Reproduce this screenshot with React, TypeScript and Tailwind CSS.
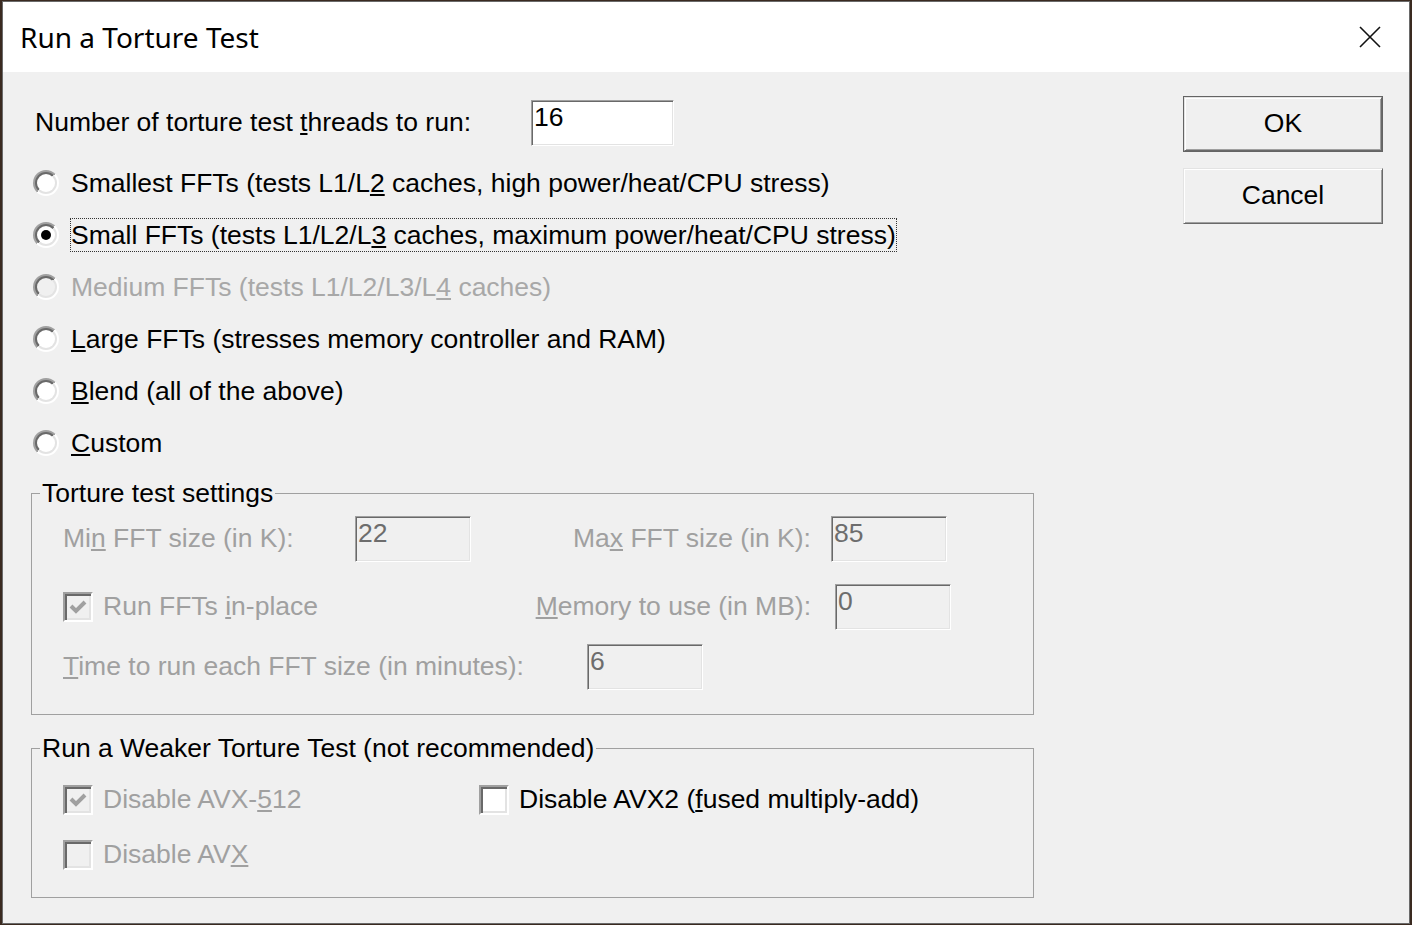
import React from 'react';

const sunkenInput =
  'border border-t-[#a0a0a0] border-l-[#a0a0a0] border-b-white border-r-white shadow-[inset_1px_1px_0_#696969,inset_-1px_-1px_0_#e3e3e3]';

const Radio = ({ checked = false, disabled = false }: { checked?: boolean; disabled?: boolean }) => (
  <div className="w-[26px] h-[26px] rounded-full p-[2px] bg-[linear-gradient(135deg,#a0a0a0_50%,#ffffff_50%)] shrink-0">
    <div className="w-full h-full rounded-full p-[2px] bg-[linear-gradient(135deg,#696969_50%,#e3e3e3_50%)]">
      <div
        className={`w-full h-full rounded-full flex items-center justify-center ${
          disabled ? 'bg-[#f0f0f0]' : 'bg-white'
        }`}
      >
        {checked && <div className="w-[10px] h-[10px] rounded-full bg-black" />}
      </div>
    </div>
  </div>
);

const Check = ({ checked = false, disabled = false }: { checked?: boolean; disabled?: boolean }) => (
  <div
    className={`w-[30px] h-[30px] shrink-0 border-2 border-t-[#a0a0a0] border-l-[#a0a0a0] border-b-white border-r-white shadow-[inset_2px_2px_0_#696969,inset_-2px_-2px_0_#e3e3e3] flex items-center justify-center ${
      disabled ? 'bg-[#f0f0f0]' : 'bg-white'
    }`}
  >
    {checked && (
      <svg width="20" height="20" viewBox="0 0 20 20">
        <polyline
          points="3,9 8,14 17,5"
          fill="none"
          stroke={disabled ? '#a0a0a0' : '#000'}
          strokeWidth="4"
        />
      </svg>
    )}
  </div>
);

const Field = ({ value, disabled = false, w = 'w-[116px]' }: { value: string; disabled?: boolean; w?: string }) => (
  <div
    className={`${w} h-[46px] shrink-0 ${sunkenInput} ${
      disabled ? 'bg-[#f0f0f0] text-[#6d6d6d]' : 'bg-white text-black'
    } pl-[2px] pt-[1px] leading-[30px]`}
  >
    {value}
  </div>
);

const RadioRow = ({
  children,
  checked,
  disabled,
  focus,
}: {
  children: React.ReactNode;
  checked?: boolean;
  disabled?: boolean;
  focus?: boolean;
}) => (
  <div className="h-[52px] flex items-center pl-[2px]">
    <Radio checked={checked} disabled={disabled} />
    <span
      className={`ml-[11px] leading-[32px] border ${
        focus ? 'border-dotted border-[#333]' : 'border-transparent'
      } ${disabled ? 'text-[#a8a8a8]' : 'text-black'}`}
    >
      {children}
    </span>
  </div>
);

export default function App() {
  return (
    <div className="w-[1412px] h-[925px] bg-[#3a2a20] pl-[2px] pt-[1px] pr-[2px] pb-[1px] font-['Liberation_Sans',Arial,sans-serif] text-[26.5px] overflow-hidden">
      <div className="w-full h-full border border-[#6a6a6a] flex flex-col">
        {/* title bar */}
        <div className="h-[70px] bg-white flex items-center justify-between pl-[17px] pr-[28px] shrink-0">
          <span className="font-['Noto_Sans',sans-serif] text-[28px] text-black">Run a Torture Test</span>
          <svg width="22" height="22" viewBox="0 0 22 22">
            <path d="M1 1 L21 21 M21 1 L1 21" stroke="#111" strokeWidth="1.6" />
          </svg>
        </div>

        {/* body */}
        <div className="flex-1 bg-[#f0f0f0] flex justify-between pr-[26px]">
          <div className="pl-[28px] pt-[28px]">
            <div className="h-[46px] flex items-center">
              <span className="w-[500px] pl-[4px]">
                Number of torture test <u>t</u>hreads to run:
              </span>
              <Field value="16" w="w-[143px]" />
            </div>

            <div className="mt-[11px]">
              <RadioRow>
                Smallest FFTs (tests L1/L<u>2</u> caches, high power/heat/CPU stress)
              </RadioRow>
              <RadioRow checked focus>
                Small FFTs (tests L1/L2/L<u>3</u> caches, maximum power/heat/CPU stress)
              </RadioRow>
              <RadioRow disabled>
                Medium FFTs (tests L1/L2/L3/L<u>4</u> caches)
              </RadioRow>
              <RadioRow>
                <u>L</u>arge FFTs (stresses memory controller and RAM)
              </RadioRow>
              <RadioRow>
                <u>B</u>lend (all of the above)
              </RadioRow>
              <RadioRow>
                <u>C</u>ustom
              </RadioRow>
            </div>

            {/* Torture test settings */}
            <fieldset className="mt-[9px] w-[1003px] border border-[#a0a0a0] pl-[8px] pr-0 pt-0 pb-[24px]">
              <legend className="px-[2px] leading-[30px] text-black">Torture test settings</legend>
              <div className="pl-[23px] pt-[8px] text-[#a0a0a0]">
                <div className="h-[46px] flex items-center">
                  <span className="w-[292px]">
                    Mi<u>n</u> FFT size (in K):
                  </span>
                  <Field value="22" disabled />
                  <span className="w-[340px] text-right">
                    Ma<u>x</u> FFT size (in K):
                  </span>
                  <div className="ml-[20px]">
                    <Field value="85" disabled />
                  </div>
                </div>

                <div className="mt-[22px] h-[46px] flex items-center">
                  <div className="w-[748px] flex items-center justify-between">
                    <div className="flex items-center">
                      <Check checked disabled />
                      <span className="ml-[10px]">
                        Run FFTs <u>i</u>n-place
                      </span>
                    </div>
                    <span>
                      <u>M</u>emory to use (in MB):
                    </span>
                  </div>
                  <div className="ml-[24px]">
                    <Field value="0" disabled />
                  </div>
                </div>

                <div className="mt-[14px] h-[46px] flex items-center">
                  <span className="w-[524px]">
                    <u>T</u>ime to run each FFT size (in minutes):
                  </span>
                  <Field value="6" disabled />
                </div>
              </div>
            </fieldset>

            {/* Weaker torture test */}
            <fieldset className="mt-[18px] w-[1003px] border border-[#a0a0a0] pl-[8px] pr-0 pt-0 pb-[25px]">
              <legend className="px-[2px] leading-[30px] text-black">
                Run a Weaker Torture Test (not recommended)
              </legend>
              <div className="pl-[23px] pt-[20px]">
                <div className="h-[34px] flex items-center">
                  <div className="w-[416px] flex items-center text-[#a0a0a0]">
                    <Check checked disabled />
                    <span className="ml-[10px]">
                      Disable AVX-<u>5</u>12
                    </span>
                  </div>
                  <div className="flex items-center text-black">
                    <Check />
                    <span className="ml-[10px]">
                      Disable AVX2 (<u>f</u>used multiply-add)
                    </span>
                  </div>
                </div>
                <div className="mt-[21px] h-[34px] flex items-center text-[#a0a0a0]">
                  <Check disabled />
                  <span className="ml-[10px]">
                    Disable AV<u>X</u>
                  </span>
                </div>
              </div>
            </fieldset>
          </div>

          {/* buttons */}
          <div className="pt-[24px] flex flex-col">
            <div className="w-[200px] h-[56px] border border-[#646464]">
              <div className="w-full h-full bg-[#f0f0f0] border border-t-[#e3e3e3] border-l-[#e3e3e3] border-b-[#696969] border-r-[#696969] shadow-[inset_1px_1px_0_#fff,inset_-1px_-1px_0_#a0a0a0] flex items-center justify-center">
                OK
              </div>
            </div>
            <div className="mt-[16px] w-[200px] h-[56px] bg-[#f0f0f0] border border-t-[#e3e3e3] border-l-[#e3e3e3] border-b-[#696969] border-r-[#696969] shadow-[inset_1px_1px_0_#fff,inset_-1px_-1px_0_#a0a0a0] flex items-center justify-center">
              Cancel
            </div>
          </div>
        </div>
      </div>
    </div>
  );
}
